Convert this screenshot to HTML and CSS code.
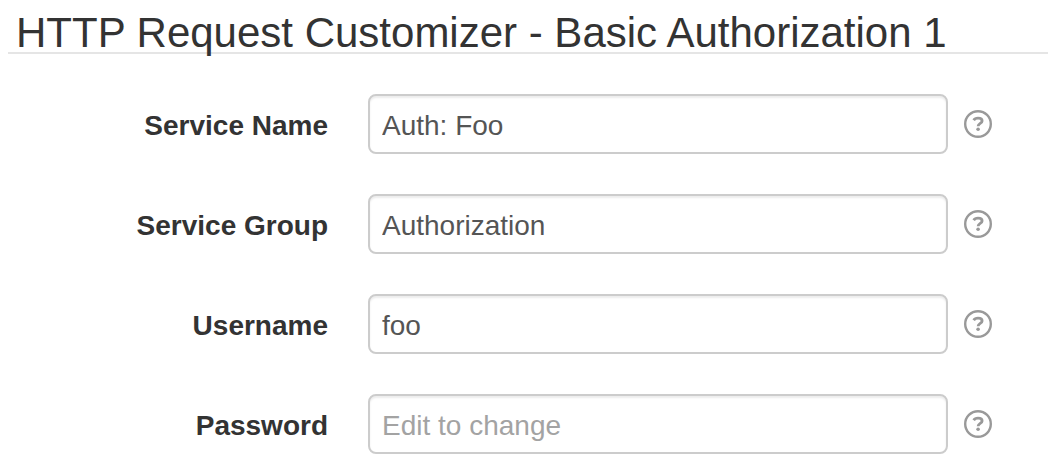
FILE: index.html
```html
<!DOCTYPE html>
<html lang="en">
<head>
<meta charset="utf-8">
<meta name="viewport" content="width=device-width, initial-scale=1">
<title>HTTP Request Customizer</title>
<link rel="stylesheet" href="styles.css">
</head>
<body>
<svg class="sprite" aria-hidden="true">
  <symbol id="help" viewBox="0 0 28 28">
    <circle cx="14" cy="14" r="12.8" fill="none" stroke="currentColor" stroke-width="2.4"/>
    <path d="M9.700 10.300C10.500 8.900 12 8.200 14 8.200c2.400 0 4.100 1 4.100 2.800 0 2.500-4 2.400-4 5.300" fill="none" stroke="currentColor" stroke-width="2.800"/>
    <circle cx="14.100" cy="19.200" r="1.800" fill="currentColor"/>
  </symbol>
</svg>
<form class="settings">
  <h1 class="title">HTTP Request Customizer - Basic Authorization 1</h1>
  <div class="row">
    <label class="label" for="service-name">Service Name</label>
    <input class="field" id="service-name" type="text" value="Auth: Foo">
    <button class="help" type="button" aria-label="Help"><svg class="icon"><use href="#help"/></svg></button>
  </div>
  <div class="row">
    <label class="label" for="service-group">Service Group</label>
    <input class="field" id="service-group" type="text" value="Authorization">
    <button class="help" type="button" aria-label="Help"><svg class="icon"><use href="#help"/></svg></button>
  </div>
  <div class="row">
    <label class="label" for="username">Username</label>
    <input class="field" id="username" type="text" value="foo">
    <button class="help" type="button" aria-label="Help"><svg class="icon"><use href="#help"/></svg></button>
  </div>
  <div class="row">
    <label class="label" for="password">Password</label>
    <input class="field" id="password" type="password" placeholder="Edit to change">
    <button class="help" type="button" aria-label="Help"><svg class="icon"><use href="#help"/></svg></button>
  </div>
</form>
</body>
</html>
```
FILE: styles.css
```css
* { box-sizing: border-box; }
body {
  margin: 0;
  background: #fff;
  color: #333;
  font-family: "Liberation Sans", Arial, sans-serif;
}
.sprite { position: absolute; width: 0; height: 0; }
.settings {
  display: flex;
  flex-direction: column;
  gap: 40px;
  padding: 14px 0 22px 8px;
}
.title {
  margin: 0;
  padding-left: 8px;
  border-bottom: 2px solid #e5e5e5;
  font-size: 42px;
  line-height: 38px;
  font-weight: 400;
  white-space: nowrap;
}
.row {
  display: grid;
  grid-template-columns: 320px 1fr 28px;
  align-items: center;
  padding-right: 56px;
}
.label {
  padding-top: 4px;
  text-align: right;
  font-size: 28px;
  line-height: 40px;
  font-weight: 700;
}
.field {
  min-width: 0;
  height: 60px;
  margin: 0 16px 0 40px;
  padding: 6px 12px 2px;
  border: 2px solid #ccc;
  border-radius: 8px;
  background: #fff;
  box-shadow: inset 0 2px 2px rgba(0, 0, 0, 0.08);
  color: #555;
  font: 28px/40px "Liberation Sans", Arial, sans-serif;
}
.field::placeholder { color: #a3a3a3; opacity: 1; }
.help {
  display: flex;
  padding: 0;
  border: 0;
  background: none;
  color: #999;
}
.icon { width: 28px; height: 28px; }
```
